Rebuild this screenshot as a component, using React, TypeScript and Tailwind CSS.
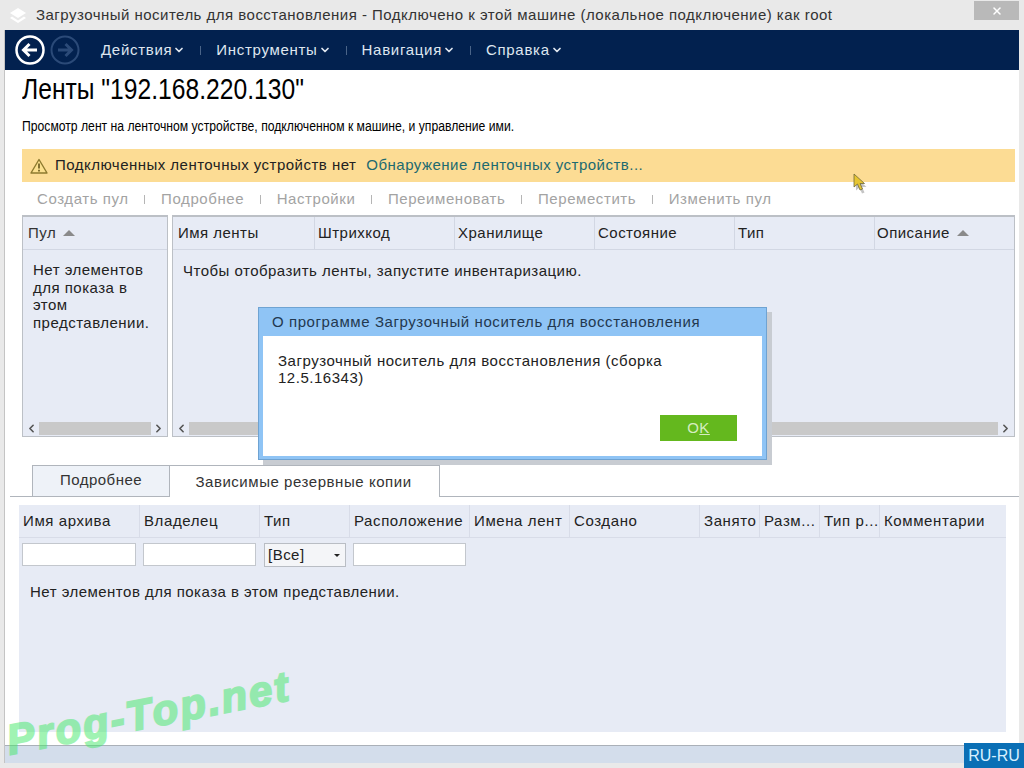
import { ChevronDown, ChevronLeft, ChevronRight, X } from "lucide-react";

const menus = ["Действия", "Инструменты", "Навигация", "Справка"];
const tools = ["Создать пул", "Подробнее", "Настройки", "Переименовать", "Переместить", "Изменить пул"];
const tapeCols = ["Имя ленты", "Штрихкод", "Хранилище", "Состояние", "Тип", "Описание"];
const archiveCols = [
  { label: "Имя архива", w: "w-[121px]" },
  { label: "Владелец", w: "w-[120px]" },
  { label: "Тип", w: "w-[90px]" },
  { label: "Расположение", w: "w-[120px]" },
  { label: "Имена лент", w: "w-[100px]" },
  { label: "Создано", w: "w-[130px]" },
  { label: "Занято", w: "w-[60px]" },
  { label: "Разм...", w: "w-[60px]" },
  { label: "Тип р...", w: "w-[60px]" },
  { label: "Комментарии", w: "flex-1" },
];

const SortUp = () => <span className="ml-[7px] inline-block h-0 w-0 border-x-[6px] border-b-[6px] border-x-transparent border-b-[#8a8a8a] align-[3px]" />;

const Scrollbar = () => (
  <div className="mx-[1px] flex h-[17px] items-end pb-[1px] text-[#555]">
    <ChevronLeft className="mx-[1px] h-[13px] w-[13px]" strokeWidth={3} />
    <div className="h-[13px] flex-1 bg-[#c9c9c9]" />
    <ChevronRight className="mx-[1px] h-[13px] w-[13px]" strokeWidth={3} />
  </div>
);

export default function App() {
  return (
    <div className="relative flex h-[768px] w-[1024px] flex-col overflow-hidden bg-[#e9e9e9] font-['Liberation_Sans',sans-serif] text-[15px] tracking-[0.48px] text-[#222]">
      {/* Title bar */}
      <div className="flex h-[30px] shrink-0 items-center pl-[9px]">
        <svg width="18" height="18" viewBox="0 0 18 18">
          <path d="M9 2 17 7 9 12 1 7Z" fill="#fff" />
          <path d="M3 10.5 9 14.5 15 10.5 17 12 9 17 1 12Z" fill="#fff" />
        </svg>
        <span className="ml-[9px] text-[#333]">
          Загрузочный носитель для восстановления - Подключено к этой машине (локальное подключение) как root
        </span>
        <div className="absolute right-[5px] top-[1px] flex h-[19px] w-[45px] items-center justify-center bg-[#b9b9b9]">
          <X className="h-[12px] w-[12px] text-white" strokeWidth={3} />
        </div>
      </div>

      {/* Main window */}
      <div className="mx-[5px] flex flex-1 flex-col bg-white shadow-[-1px_0_0_#c4c4c4]">
        <div className="flex h-[40px] shrink-0 items-center bg-[#02214f] pl-[10px] text-white">
          <svg width="30" height="30" viewBox="0 0 30 30">
            <circle cx="15" cy="15" r="13.5" fill="none" stroke="#fff" strokeWidth="2.5" />
            <path d="M22 15H9M14.5 9 8.5 15l6 6" fill="none" stroke="#fff" strokeWidth="3" />
          </svg>
          <svg className="ml-[5px]" width="30" height="30" viewBox="0 0 30 30">
            <circle cx="15" cy="15" r="13.5" fill="none" stroke="#2b4a78" strokeWidth="2" />
            <path d="M8 15H21M15.5 9 21.5 15l-6 6" fill="none" stroke="#2b4a78" strokeWidth="3" />
          </svg>
          <div className="ml-[21px] flex items-center tracking-[0.7px] text-[#dfe6ef]">
            {menus.map((m, i) => (
              <div key={m} className="flex items-center">
                <span>{m}</span>
                <ChevronDown className="ml-[1px] h-[12px] w-[12px]" strokeWidth={3.5} />
                {i < menus.length - 1 && <span className="mx-[15px] h-[9px] w-px bg-[#4a6488]" />}
              </div>
            ))}
          </div>
        </div>

        <div className="flex flex-1 flex-col">
          <div className="pl-[17px]">
            <h1 className="mt-[2px] h-[35px] origin-left scale-x-[0.85] whitespace-nowrap text-[29px] leading-[35px] tracking-normal text-black">Ленты "192.168.220.130"</h1>
            <p className="mt-[10px] h-[18px] origin-left scale-x-[0.87] whitespace-nowrap text-[14px] leading-[18px] tracking-normal text-black">
              Просмотр лент на ленточном устройстве, подключенном к машине, и управление ими.
            </p>
          </div>

          <div className="mx-[17px] mt-[14px] flex h-[33px] w-[993px] items-center bg-[#fcdc94] pl-[8px]">
            <svg width="18" height="16" viewBox="0 0 18 16">
              <path d="M9 1.5 17 15H1Z" fill="#fbe08f" stroke="#8d7a2f" strokeWidth="1.4" strokeLinejoin="round" />
              <path d="M9 5.5v5M9 11.8v1.6" stroke="#5b4c15" strokeWidth="1.5" />
            </svg>
            <span className="ml-[7px]">Подключенных ленточных устройств нет</span>
            <span className="ml-[10px] text-[#1d6a70]">Обнаружение ленточных устройств...</span>
          </div>

          <div className="mt-[3px] flex h-[28px] items-center pl-[32px] tracking-[0.58px] text-[#a3a3a3]">
            {tools.map((t, i) => (
              <div key={t} className="flex items-center">
                <span>{t}</span>
                {i < tools.length - 1 && <span className="mx-[15.75px] h-[9px] w-px bg-[#b5b5b5]" />}
              </div>
            ))}
          </div>

          <div className="mx-[17px] mt-[2px] flex h-[222px] w-[993px] gap-[4px]">
            <div className="flex w-[146px] flex-col border border-t-2 border-[#bcc0c6] bg-[#e7ebf5]">
              <div className="flex h-[33px] items-center border-b border-[#d2d7e3] pl-[5px] text-[#333]">
                Пул
                <SortUp />
              </div>
              <p className="flex-1 pl-[10px] pr-[12px] pt-[11px] leading-[17.5px]">Нет элементов для показа в этом представлении.</p>
              <Scrollbar />
            </div>
            <div className="flex flex-1 flex-col border border-t-2 border-[#bcc0c6] bg-[#e7ebf5]">
              <div className="flex h-[33px] border-b border-[#d2d7e3]">
                {tapeCols.map((c, i) => (
                  <div key={c} className={`flex items-center border-[#d2d7e3] ${i === 5 ? "flex-1 pl-[2px]" : i === 0 ? "w-[142px] border-r pl-[5px]" : "w-[140px] border-r pl-[3px]"}`}>
                    {c}
                    {i === 5 && <SortUp />}
                  </div>
                ))}
              </div>
              <p className="flex-1 pl-[10px] pt-[10px]">Чтобы отобразить ленты, запустите инвентаризацию.</p>
              <Scrollbar />
            </div>
          </div>

          {/* Tabs */}
          <div className="ml-[5px] mt-[28px] flex h-[32px] border-b border-[#b0b5bc]">
            <div className="ml-[22px] flex h-[31px] w-[138px] items-center justify-center border border-b-0 border-[#b0b5bc] bg-[#eef2f8] pb-[2px] text-[#333]">Подробнее</div>
            <div className="relative z-10 flex h-[32px] w-[270px] items-center justify-center border-r border-t border-[#b0b5bc] bg-white pr-[2px] pt-[2px] tracking-[0.55px] text-[#333]">Зависимые резервные копии</div>
          </div>

          <div className="ml-[14px] mt-[8px] flex h-[227px] w-[987px] flex-col bg-[#e7ebf5]">
            <div className="flex h-[33px] border-b border-[#d8dce8]">
              {archiveCols.map((c) => (
                <div key={c.label} className={`flex items-center overflow-hidden whitespace-nowrap border-r border-[#d8dce8] pl-[4px] pt-[1px] tracking-[0.6px] last:border-r-0 ${c.w}`}>
                  {c.label}
                </div>
              ))}
            </div>
            <div className="mt-[5px] flex h-[24px] items-start pl-[3px]">
              <div className="h-[23px] w-[114px] border border-[#c3c7cd] bg-white" />
              <div className="ml-[7px] h-[23px] w-[113px] border border-[#c3c7cd] bg-white" />
              <div className="ml-[8px] flex h-[24px] w-[82px] items-center justify-between border border-[#b9bdc4] bg-[#f4f5f8] px-[3px] pr-[5px]">
                [Все]
                <span className="h-0 w-0 border-x-[3px] border-t-[3px] border-x-transparent border-t-[#222]" />
              </div>
              <div className="ml-[7px] h-[23px] w-[113px] border border-[#c3c7cd] bg-white" />
            </div>
            <p className="pl-[11px] pt-[14px]">Нет элементов для показа в этом представлении.</p>
          </div>

          <div className="mt-[13px] flex-1 border-t border-[#aab0b8] bg-[#d3ddeb]" />
        </div>
      </div>
      <div className="h-[5px] shrink-0" />

      {/* About dialog */}
      <div className="absolute left-[258px] top-[307px] h-[153px] w-[509px] border border-[#6fa3d2] bg-[#8fc4f5] shadow-[5px_5px_0_#c8ccd2]">
        <div className="flex h-[28px] items-center pl-[13px] tracking-[0.58px] text-[#23384f]">О программе Загрузочный носитель для восстановления</div>
        <div className="mx-[4px] h-[120px] bg-white">
          <p className="w-[440px] pl-[15px] pt-[16px] leading-[17px] tracking-[0.52px] text-[#222]">Загрузочный носитель для восстановления (сборка 12.5.16343)</p>
          <div className="ml-[397px] mt-[29px] flex h-[26px] w-[77px] items-center justify-center bg-[#64b81e] text-[#d5edc0]">
            O<span className="underline">K</span>
          </div>
        </div>
      </div>

      {/* Mouse cursor */}
      <svg className="absolute left-[852px] top-[173px]" width="16" height="22" viewBox="0 0 16 22">
        <path d="M2.5 3 2.5 16 6 13 8.5 19 11 18 8.5 12.5 13 12.5Z" fill="#8a8a8a" opacity="0.5" transform="translate(1.5 1.5)" />
        <path d="M2 1 2 14 5.5 11 8 17 10.5 16 8 10.5 12.5 10.5Z" fill="#e6c531" stroke="#6f6a3a" strokeWidth="0.8" />
      </svg>

      {/* Language badge */}
      <div className="absolute bottom-0 right-0 flex h-[25px] w-[60px] items-center justify-center bg-[#0a6fb5] text-[16px] tracking-normal text-[#d8f0ff]">RU-RU</div>

      {/* Watermark */}
      <div className="absolute left-[7px] top-[716px] origin-left -rotate-[11deg] whitespace-nowrap text-[42px] font-bold italic leading-[50px] tracking-[2.4px] text-[#44e86a] opacity-50 [-webkit-text-stroke:2px_#44e86a]">
        Prog-Top.net
      </div>
    </div>
  );
}
